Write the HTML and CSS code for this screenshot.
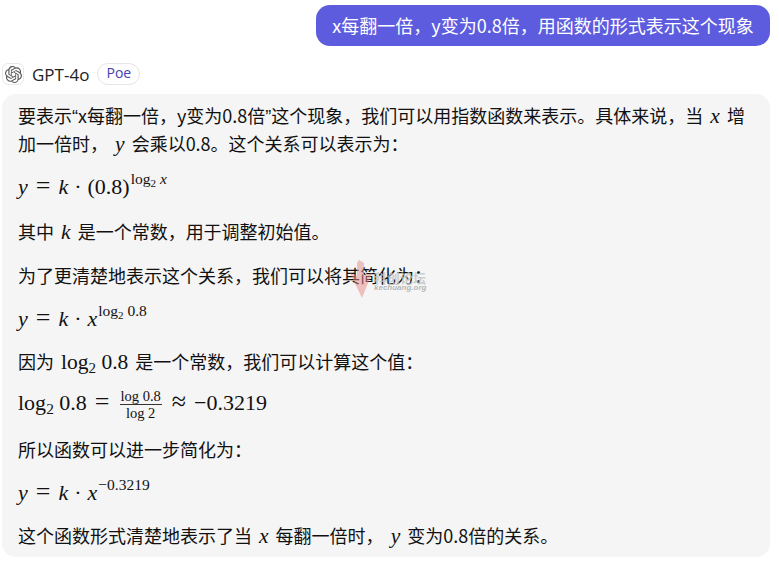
FILE: index.html
```html
<!DOCTYPE html>
<html lang="zh-CN">
<head>
<meta charset="utf-8">
<title>GPT-4o</title>
<link rel="stylesheet" href="styles.css">
</head>
<body>
<main class="chat">
  <div class="user-row"><div class="user-bubble">x每翻一倍，y变为0.8倍，用函数的形式表示这个现象</div></div>
  <header class="bot-head">
    <span class="avatar">
      <svg viewBox="0 0 24 24" width="17" height="17"><path fill="#555" d="M22.2819 9.8211a5.9847 5.9847 0 0 0-.5157-4.9108 6.0462 6.0462 0 0 0-6.5098-2.9A6.0651 6.0651 0 0 0 4.9807 4.1818a5.9847 5.9847 0 0 0-3.9977 2.9 6.0462 6.0462 0 0 0 .7427 7.0966 5.98 5.98 0 0 0 .511 4.9107 6.051 6.051 0 0 0 6.5146 2.9001A5.9847 5.9847 0 0 0 13.2599 24a6.0557 6.0557 0 0 0 5.7718-4.2058 5.9894 5.9894 0 0 0 3.9977-2.9001 6.0557 6.0557 0 0 0-.7475-7.0729zm-9.022 12.6081a4.4755 4.4755 0 0 1-2.8764-1.0408l.1419-.0804 4.7783-2.7582a.7948.7948 0 0 0 .3927-.6813v-6.7369l2.02 1.1686a.071.071 0 0 1 .038.052v5.5826a4.504 4.504 0 0 1-4.4945 4.4944zm-9.6607-4.1254a4.4708 4.4708 0 0 1-.5346-3.0137l.142.0852 4.783 2.7582a.7712.7712 0 0 0 .7806 0l5.8428-3.3685v2.3324a.0804.0804 0 0 1-.0332.0615L9.74 19.9502a4.4992 4.4992 0 0 1-6.1408-1.6464zM2.3408 7.8956a4.485 4.485 0 0 1 2.3655-1.9728V11.6a.7664.7664 0 0 0 .3879.6765l5.8144 3.3543-2.0201 1.1685a.0757.0757 0 0 1-.071 0l-4.8303-2.7865A4.504 4.504 0 0 1 2.3408 7.872zm16.5963 3.8558L13.1038 8.364 15.1192 7.2a.0757.0757 0 0 1 .071 0l4.8303 2.7913a4.4944 4.4944 0 0 1-.6765 8.1042v-5.6772a.79.79 0 0 0-.407-.667zm2.0107-3.0231l-.142-.0852-4.7735-2.7818a.7759.7759 0 0 0-.7854 0L9.409 9.2297V6.8974a.0662.0662 0 0 1 .0284-.0615l4.8303-2.7866a4.4992 4.4992 0 0 1 6.6802 4.66zM8.3065 12.863l-2.02-1.1638a.0804.0804 0 0 1-.038-.0567V6.0742a4.4992 4.4992 0 0 1 7.3757-3.4537l-.142.0805L8.704 5.459a.7948.7948 0 0 0-.3927.6813zm1.0976-2.3654l2.602-1.4998 2.6069 1.4998v2.9994l-2.5974 1.4997-2.6067-1.4997Z"/></svg>
    </span>
    <span class="bot-name">GPT-4o</span>
    <span class="tag">Poe</span>
  </header>
  <section class="bot-bubble">
    <p>要表示<span class="q">“</span>x每翻一倍，y变为0.8倍<span class="q">”</span>这个现象，我们可以用指数函数来表示。具体来说，当 <i class="m">x</i> 增加一倍时， <i class="m">y</i> 会乘以0.8。这个关系可以表示为：</p>
    <p class="f"><i>y</i><span class="op">=</span><i>k</i><span class="dot">·</span><span>(0.8)</span><sup>log<sub>2</sub> <i>x</i></sup></p>
    <p>其中 <i class="m">k</i> 是一个常数，用于调整初始值。</p>
    <p>为了更清楚地表示这个关系，我们可以将其简化为：</p>
    <p class="f short"><i>y</i><span class="op">=</span><i>k</i><span class="dot">·</span><i>x</i><sup>log<sub>2</sub> 0.8</sup></p>
    <p>因为 <span class="m">log<sub>2</sub> 0.8</span> 是一个常数，我们可以计算这个值：</p>
    <p class="f raised">log<sub>2</sub> 0.8<span class="op">=</span><span class="frac"><span class="num">log 0.8</span><span class="den">log 2</span></span><span class="op">≈</span>−0.3219</p>
    <p>所以函数可以进一步简化为：</p>
    <p class="f short"><i>y</i><span class="op">=</span><i>k</i><span class="dot">·</span><i>x</i><sup>−0.3219</sup></p>
    <p>这个函数形式清楚地表示了当 <i class="m">x</i> 每翻一倍时， <i class="m">y</i> 变为0.8倍的关系。</p>
  </section>
  <div class="mark" aria-hidden="true">
    <svg viewBox="0 0 24 38" width="24" height="38"><path d="M10 0 L15 3 V16 L23 13 L13 38 L1 13 L8 16 V3 Z" fill="#e58a85" opacity=".5"/></svg>
    <span class="mark-text"><span class="mark-cn">科创论坛</span><span class="mark-en">kechuang.org</span></span>
  </div>
</main>
</body>
</html>
```
FILE: styles.css
```css
* { box-sizing: border-box; }
html, body { margin: 0; height: 100%; background: #fff; }
body {
  font-family: "Noto Sans CJK SC", "Noto Sans", sans-serif;
  font-size: 18px;
  color: #111;
  overflow: hidden;
}
.chat { position: relative; padding: 5px 9px 0 2px; }
.user-row { display: flex; justify-content: flex-end; }
.user-bubble {
  background: #5d5cde;
  color: #fff;
  border-radius: 14px;
  height: 41px;
  line-height: 41px;
  width: 454px;
  text-align: center;
  white-space: nowrap;
}
.bot-head { display: flex; align-items: center; margin-top: 17px; height: 22px; }
.avatar {
  width: 22px; height: 22px;
  border: 1px solid #e8e8e8;
  border-radius: 6px;
  display: flex; align-items: center; justify-content: center;
}
.bot-name { margin-left: 8px; font-family: "Open Sans", sans-serif; font-size: 17px; color: #222; }
.tag {
  margin-left: 8px;
  height: 22px; width: 43px;
  line-height: 18px;
  text-align: center;
  border: 1px solid #e6e6e6;
  border-radius: 11px;
  font-family: "Open Sans", sans-serif;
  font-size: 14px;
  color: #4241b5;
}
.bot-bubble {
  margin-top: 9px;
  background: #f5f5f5;
  border-radius: 14px;
  padding: 7px 16px 8px 16px;
  height: 463px;
}
.bot-bubble p { margin: 0 0 16px; line-height: 28px; }
.bot-bubble p:last-child { margin-bottom: 0; }
.q { font-family: "Liberation Sans", sans-serif; line-height: 0; }
.m { font-family: "Liberation Serif", serif; font-size: 21.5px; line-height: 0; margin: 0 3px; }
.bot-bubble .f {
  font-family: "Liberation Serif", serif;
  height: 28px;
  white-space: nowrap;
  font-size: 22px;
}
.bot-bubble .f.short { height: 26px; }
.bot-bubble .f.raised { margin-top: -3px; margin-bottom: 19px; }
.f i { font-style: italic; }
.op { margin: 0 8px; font-size: 26px; line-height: 0; }
.dot { margin: 0 6px; }
sup { font-size: 15.5px; line-height: 0; vertical-align: 10px; margin-left: 1px; }
sub { font-size: 70%; line-height: 0; vertical-align: -4px; }
sup sub { font-size: 11px; vertical-align: -3px; }
.frac {
  display: inline-flex; flex-direction: column; align-items: center;
  vertical-align: middle;
  margin: 0 2px;
  font-size: 14.5px; line-height: 16px;
}
.num { border-bottom: 1px solid #333; padding: 0 1px; }
.mark {
  position: absolute; left: 349px; top: 260px;
  display: flex; align-items: flex-start; gap: 1px;
  pointer-events: none;
}
.mark-text { display: flex; flex-direction: column; line-height: 1; padding-top: 11px; }
.mark-cn { font-size: 13px; font-weight: 700; color: rgba(195,195,195,.8); }
.mark-en { font-family: "Liberation Sans", sans-serif; font-size: 8px; font-style: italic; font-weight: 700; color: rgba(170,170,170,.85); }
```
